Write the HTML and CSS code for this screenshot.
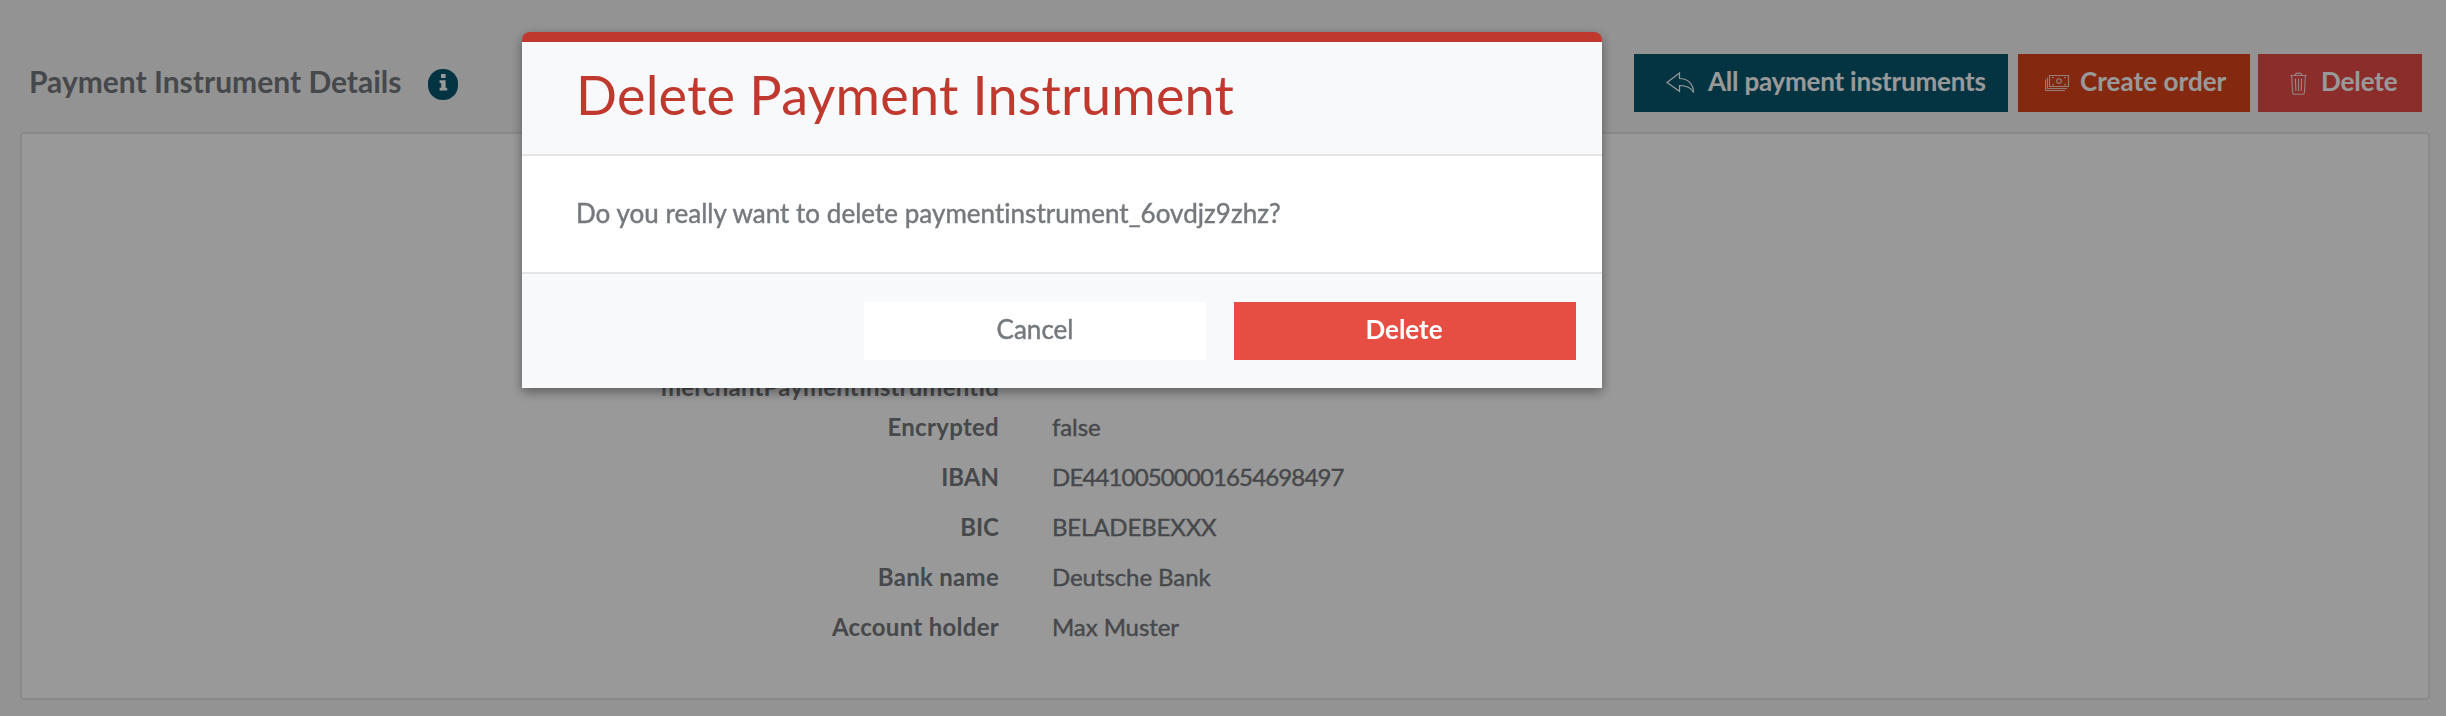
FILE: index.html
```html
<!DOCTYPE html>
<html lang="en">
<head>
<meta charset="utf-8">
<title>Payment Instrument Details</title>
<link rel="stylesheet" href="styles.css">
</head>
<body>
<main class="page">
  <header class="page-header">
    <h1 class="page-title"><span>Payment Instrument Details</span></h1>
    <svg class="info-icon" viewBox="0 0 30 31"><rect width="30" height="31" rx="14.5" fill="#08586e"/><path d="M13 5h4.600v4H13zM11.600 11.200h6v7.600h1.600v2.700h-7.600v-2.700h1.600v-4.900h-1.600z" fill="#fff"/></svg>
    <nav class="actions">
      <button class="btn btn-back">
        <svg width="29" height="22" viewBox="0 0 29 22" fill="none" stroke="#fff" stroke-width="1.2"><path d="M1 10.500L13.500 1V6.500C22 6.500 27.500 12 27.500 20.500C25 15 20.500 13.500 13.500 13.500V19.300Z"/></svg>
        <span>All payment instruments</span>
      </button>
      <button class="btn btn-create">
        <svg width="25" height="18" viewBox="0 0 25 18" fill="none" stroke="#fff" stroke-opacity=".75" stroke-width="1.100"><path d="M4.500 1.500h19v11h-19zM2.500 3.500v11h19.500M.6 5.500v11H20M7 3.500h2M19 3.500h2M7 10.800h2M19 10.800h2"/><circle cx="14" cy="7" r="2.300"/></svg>
        <span>Create order</span>
      </button>
      <button class="btn btn-remove">
        <svg width="17" height="23" viewBox="0 0 17 23" fill="none" stroke="#fff" stroke-opacity=".8" stroke-width="1.100"><path d="M.3 3.500h16.400M5 3.500C5 .3 12 .3 12 3.500M1.600 3.500l1 17c.1 1.200.6 1.700 1.600 1.700h8.600c1 0 1.500-.5 1.600-1.700l1-17M5.300 6.500l.6 12.500M8.500 6.500V19M11.700 6.500L11.100 19"/></svg>
        <span>Delete</span>
      </button>
    </nav>
  </header>
  <section class="panel">
    <dl class="details">
      <dt class="merchant">merchantPaymentInstrumentId</dt><dd></dd>
      <dt>Encrypted</dt><dd>false</dd>
      <dt class="short">IBAN</dt><dd class="iban">DE44100500001654698497</dd>
      <dt class="short">BIC</dt><dd class="bic">BELADEBEXXX</dd>
      <dt>Bank name</dt><dd>Deutsche Bank</dd>
      <dt>Account holder</dt><dd>Max Muster</dd>
    </dl>
  </section>
</main>
<div class="overlay">
  <div class="modal" role="dialog">
    <div class="modal-header"><h2 class="modal-title">Delete Payment Instrument</h2></div>
    <div class="modal-body">Do you really want to delete paymentinstrument_6ovdjz9zhz?</div>
    <div class="modal-footer">
      <button class="btn modal-btn cancel"><span>Cancel</span></button>
      <button class="btn modal-btn confirm"><span>Delete</span></button>
    </div>
  </div>
</div>
</body>
</html>
```
FILE: styles.css
```css
* { box-sizing: border-box; }
body { margin: 0; background: #f5f5f5; font-family: Lato, "Liberation Sans", sans-serif; font-variant-ligatures: none; color: #75797d; }
svg { display: block; flex: none; }
.page { height: 716px; padding: 0 16px 16px 20px; overflow: hidden; display: flex; flex-direction: column; }
.page-header { height: 132px; flex: none; display: flex; align-items: flex-start; padding: 54px 8px 0 8px; }
.page-title { margin: 0; width: 400px; padding-left: 1px; font-size: 30px; line-height: 55px; font-weight: 700; white-space: nowrap; }
.info-icon { width: 30px; height: 31px; margin-top: 15px; }
.actions { display: flex; margin-left: auto; }
.btn { border: 0; height: 58px; padding: 0; display: flex; align-items: center; font: 700 26px/54px Lato, sans-serif; color: #fff; white-space: nowrap; }
.btn span { height: 58px; }
.btn-back { width: 374px; background: #08586e; padding-left: 32px; gap: 13px; margin-right: 10px; letter-spacing: -.22px; }
.btn-create { width: 232px; background: #dc441b; padding-left: 27px; gap: 10px; margin-right: 8px; letter-spacing: .05px; }
.btn-remove { width: 164px; background: #e84d48; padding-left: 32px; gap: 14px; letter-spacing: -.1px; }
.panel { flex: 1; border: 2px solid #e6e6e6; border-radius: 4px; background: #fff; padding-top: 228px; }
.details { margin: 0; display: grid; grid-template-columns: 977px 1fr; column-gap: 53px; grid-template-rows: 40px repeat(5, 50px); font-size: 24px; line-height: 50px; white-space: nowrap; }
.details dt { text-align: right; font-weight: 700; letter-spacing: .28px; }
.details .merchant { letter-spacing: .17px; }
.details .short { letter-spacing: 0; }
.details dd { margin: 0; letter-spacing: -.08px; -webkit-text-stroke: .4px currentColor; }
.details .iban { letter-spacing: -.86px; }
.details .bic { letter-spacing: -.15px; }
.overlay { position: fixed; inset: 0; background: rgba(0,0,0,.4); padding: 32px 0 0 522px; }
.modal { width: 1080px; height: 356px; background: #fff; border-top: 10px solid #c0392f; border-radius: 8px 8px 0 0; box-shadow: 0 4px 12px rgba(0,0,0,.4); }
.modal-header { height: 114px; background: #f8f9fb; border-bottom: 2px solid #e5e5e5; padding-left: 54px; }
.modal-title { margin: 0; font-size: 54px; line-height: 106px; font-weight: 400; letter-spacing: .22px; color: #c0392f; white-space: nowrap; }
.modal-body { height: 116px; padding-left: 54px; font-size: 26px; line-height: 114px; letter-spacing: .03px; white-space: nowrap; -webkit-text-stroke: .45px currentColor; }
.modal-footer { height: 116px; background: #f8f9fb; border-top: 2px solid #e5e5e5; display: flex; justify-content: flex-end; gap: 28px; padding: 28px 26px 0 0; }
.modal-btn { width: 342px; justify-content: center; }
.cancel { background: #fff; color: #75797d; font-weight: 400; -webkit-text-stroke: .45px currentColor; }
.confirm { background: #e64d43; padding-right: 2px; }
```
